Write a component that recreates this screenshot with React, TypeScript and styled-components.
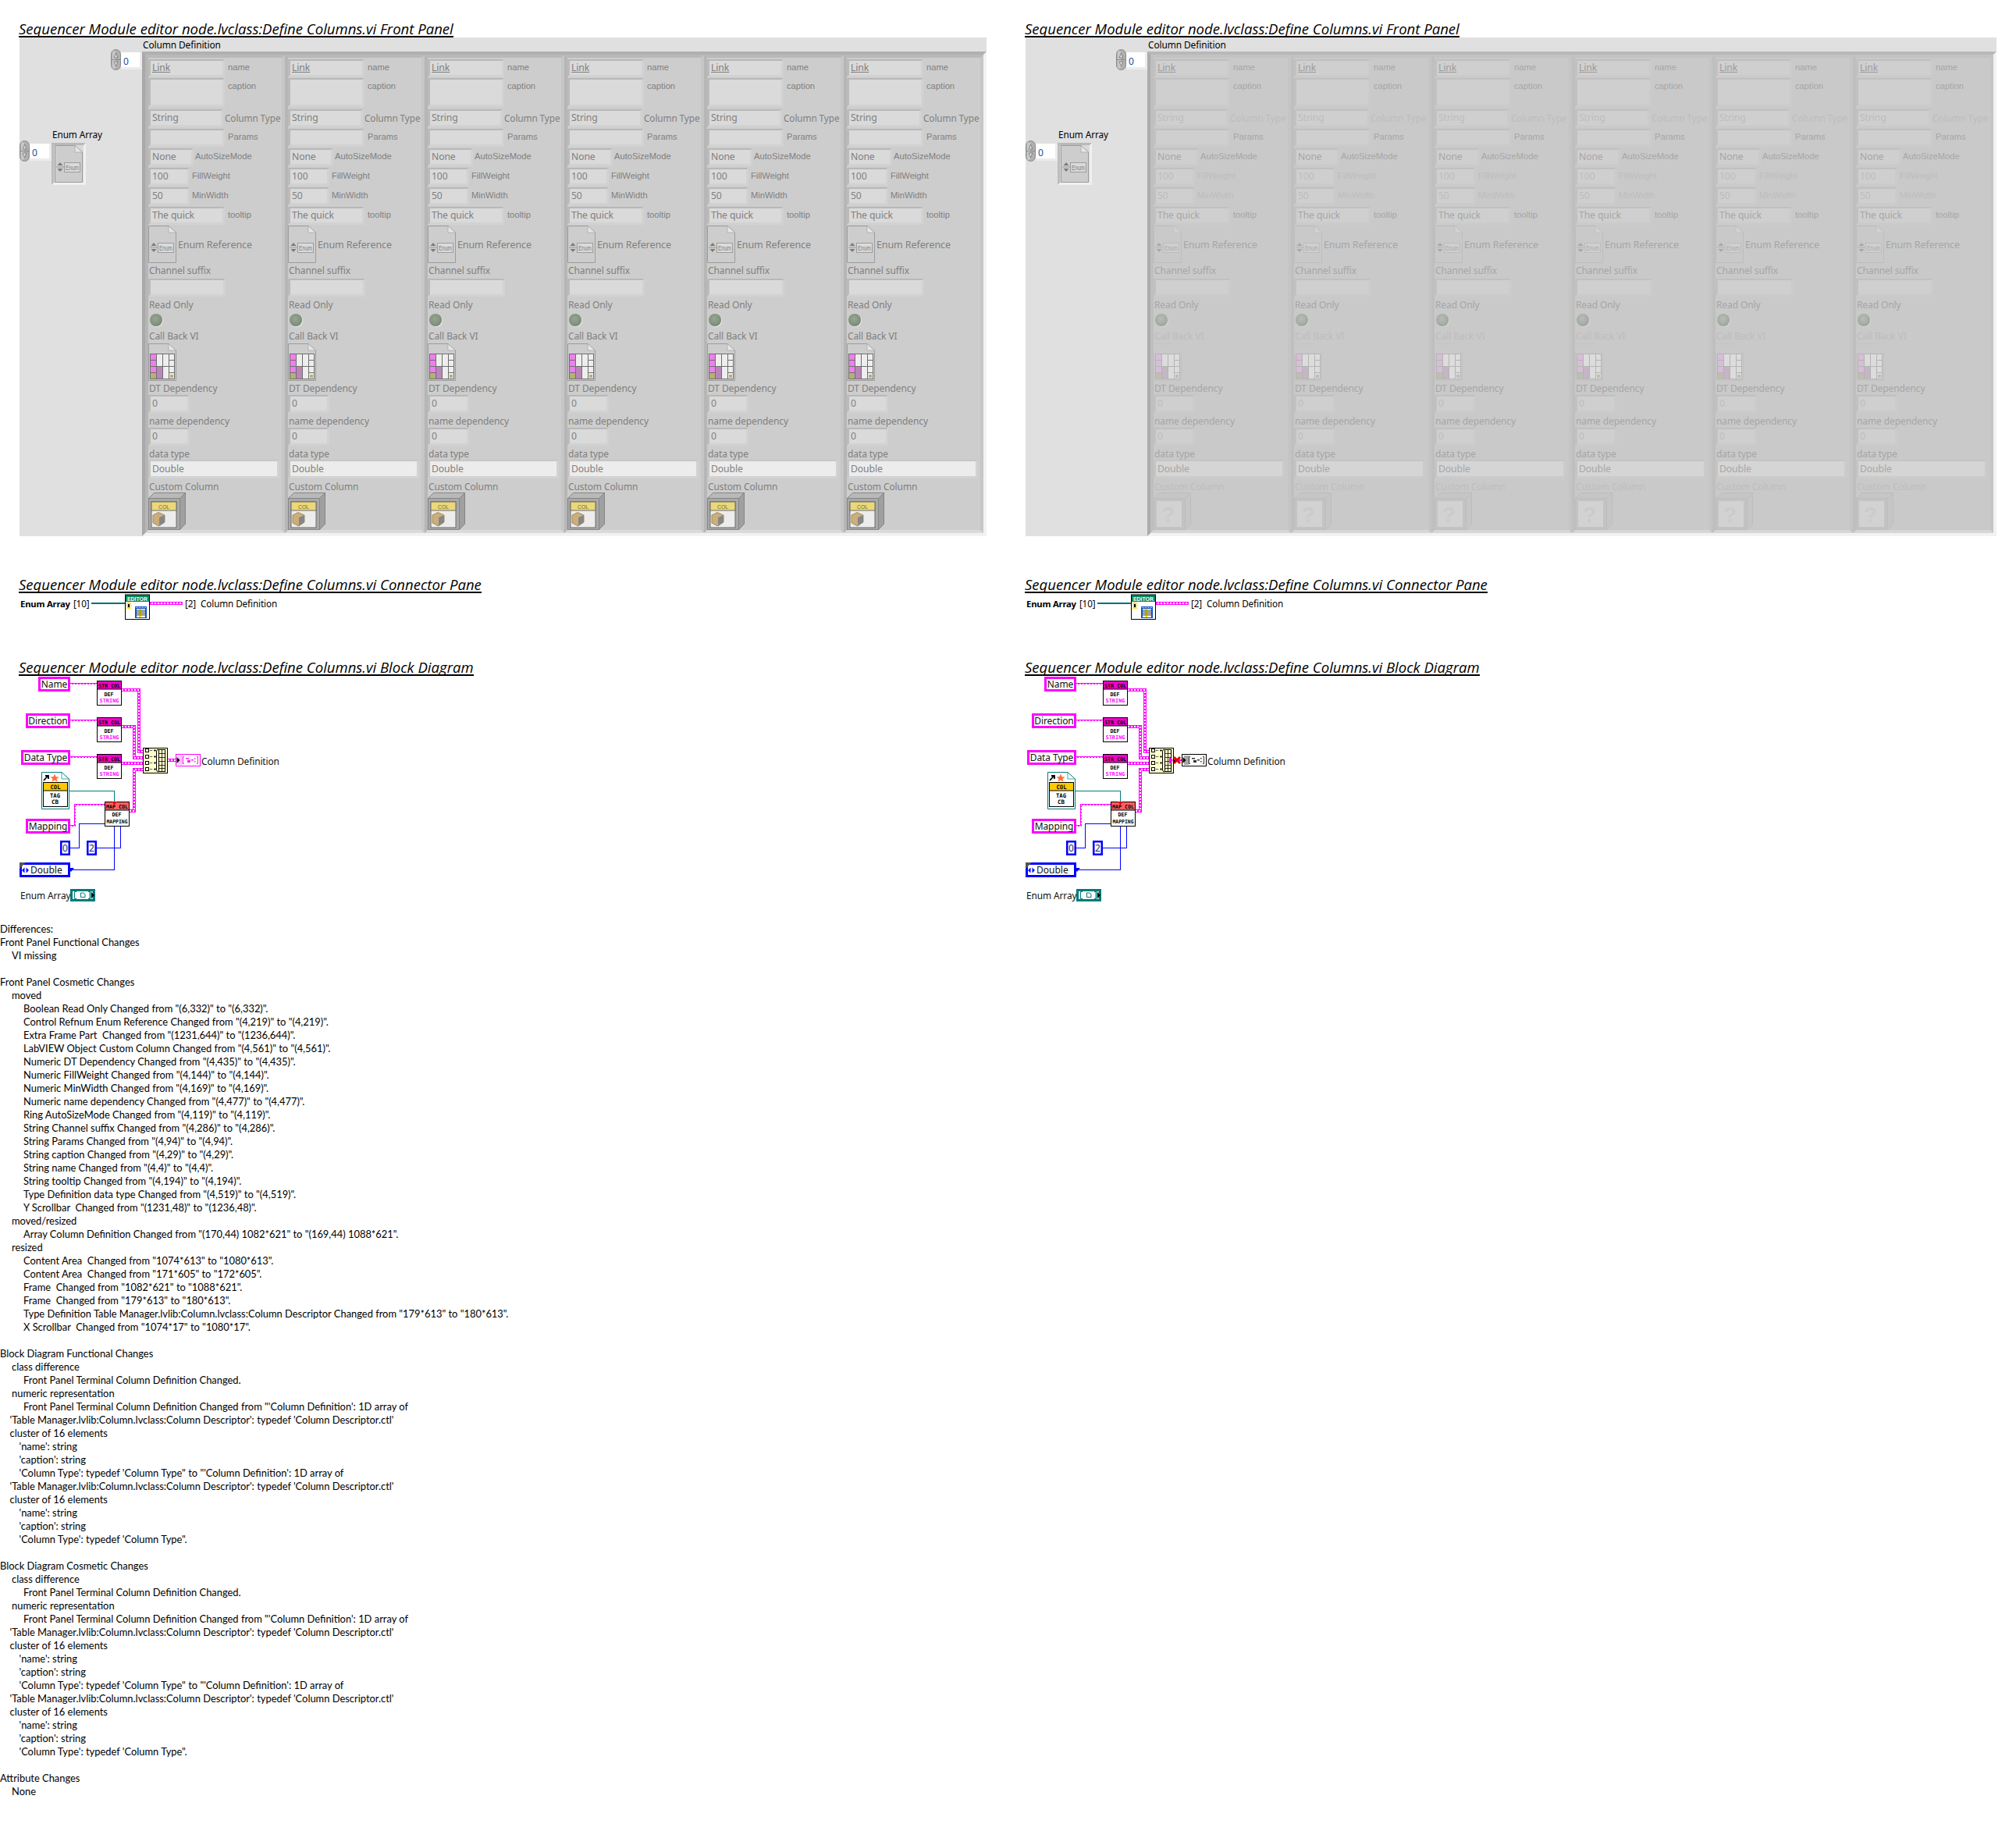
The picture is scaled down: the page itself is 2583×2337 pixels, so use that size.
import React from "react";
import styled, { createGlobalStyle } from "styled-components";

const LV = '"Noto Sans", "Liberation Sans", sans-serif';
const ORIGIN_X = 25;
const ORIGIN_Y = 26;

const Global = createGlobalStyle`
  html, body { margin: 0; padding: 0; background: #fff; }
  #root { width: 2583px; height: 2337px; overflow: hidden; }
`;

const Page = styled.div`
  width: 2583px;
  background: #fff;
  color: #000;
`;
const Versions = styled.div`
  display: grid;
  grid-template-columns: 1289px 1294px;
`;
const VersionColumn = styled.section`
  padding: 26px 0 0 25px;
  display: flex;
  flex-direction: column;
  align-items: flex-start;
`;
const Title = styled.h2<{ $gap?: number }>`
  margin: ${(p) => p.$gap ?? 0}px 0 0 -1px;
  padding: 0;
  height: 20px;
  line-height: 21px;
  font-family: "Open Sans", "Noto Sans", sans-serif;
  font-size: 18.55px;
  font-weight: 400;
  font-style: italic;
  white-space: nowrap;
  border-bottom: 2px solid #000;
`;

/* ---------- Front panel ---------- */
const Panel = styled.div`
  display: flex;
  background: #e0e0e0;
  height: 639px;
`;
const SidePane = styled.div<{ $w: number }>`
  width: ${(p) => p.$w}px;
  display: flex;
  flex-direction: column;
`;
const IndexRow = styled.div`
  display: flex;
  justify-content: flex-end;
  margin-top: 15px;
  height: 27px;
`;
const IndexBox = styled.div<{ $w: number }>`
  box-sizing: border-box;
  width: ${(p) => p.$w}px;
  height: 22px;
  margin-top: 4px;
  padding-left: 3px;
  background: #fff;
  border-right: 3px solid #ececec;
  border-bottom: 3px solid #ececec;
  font: 12px/23px ${LV};
  color: #1b4f9c;
`;
const EnumCaption = styled.div`
  margin: 74px 0 0 42px;
  height: 16px;
  font: 11.8px/16px ${LV};
  letter-spacing: -0.1px;
  color: #000;
`;
const EnumRow = styled.div`
  display: flex;
  align-items: flex-start;
`;
const EnumFrame = styled.div`
  box-sizing: border-box;
  margin-top: 3px;
  width: 44px;
  height: 54px;
  padding: 3px 4px 0 4px;
  background: #d9d9d9;
  border: 3px solid;
  border-color: #b9b9b9 #f0f0f0 #f0f0f0 #bdbdbd;
  & > svg { display: block; margin: -3px 0 0 -3px; }
`;
const ArrayPane = styled.div`
  display: flex;
  flex-direction: column;
`;
const ArrayCaption = styled.div`
  height: 18px;
  padding-left: 1px;
  font: 11.9px/19px ${LV};
  letter-spacing: -0.1px;
  color: #000;
`;
const ArrayFrame = styled.div<{ $cell: number; $faded: boolean }>`
  display: grid;
  grid-template-columns: repeat(6, ${(p) => p.$cell}px);
  border: 4px solid;
  border-color: ${(p) => (p.$faded ? "#b8b8b8 #f2f2f2 #f2f2f2 #acacac" : "#b0b0b0 #f2f2f2 #f2f2f2 #a8a8a8")};
`;
const Cell = styled.div<{ $faded: boolean }>`
  box-sizing: border-box;
  height: 613px;
  padding-top: 2px;
  overflow: hidden;
  background: ${(p) => (p.$faded ? "#c9c9c9" : "#cdcdcd")};
  border: 4px solid;
  border-color: ${(p) =>
    p.$faded ? "#c2c2c2 #c5c5c5 #d6d6d6 #bfbfbf" : "#b9b9b9 #c6c6c6 #dadada #b6b6b6"};
  display: flex;
  flex-direction: column;
`;
const Row = styled.div<{ $h: number }>`
  height: ${(p) => p.$h}px;
  display: flex;
  align-items: flex-start;
  flex: none;
`;
type Tone = "normal" | "pale" | "link";
const toneColor = (faded: boolean, tone: Tone = "normal") =>
  !faded ? "#7f7f7f" : tone === "pale" ? "#bdbdbd" : tone === "link" ? "#9c9c9c" : "#a6a6a6";

const Field = styled.div<{ $w: number; $h: number; $faded: boolean; $tone?: Tone; $under?: boolean }>`
  box-sizing: border-box;
  width: ${(p) => p.$w}px;
  height: ${(p) => p.$h}px;
  flex: none;
  padding-left: 2px;
  background: ${(p) => (p.$faded ? "#cfcfcf" : "#dadada")};
  border: 3px solid;
  border-top-width: 2.5px;
  border-color: ${(p) => (p.$faded ? "#c0c0c0 #cbcbcb #cbcbcb #c1c1c1" : "#b8b8b8 #d2d2d2 #d2d2d2 #bbbbbb")};
  color: ${(p) => toneColor(p.$faded, p.$tone)};
  font: 12.2px/18px ${LV};
  letter-spacing: -0.1px;
  white-space: nowrap;
  text-decoration: ${(p) => (p.$under ? "underline" : "none")};
`;
const TypeField = styled(Field)`
  background: ${(p) => (p.$faded ? "#d5d5d5" : "#ececec")};
  border-color: ${(p) => (p.$faded ? "#c4c4c4 #cbcbcb #cbcbcb #c4c4c4" : "#c6c6c6 #d2d2d2 #d2d2d2 #c6c6c6")};
  line-height: 20px;
`;
const SmallLabel = styled.span<{ $gap: number; $faded: boolean; $tone?: Tone }>`
  margin-left: ${(p) => p.$gap}px;
  font: 11.2px/20px "Liberation Sans", sans-serif;
  color: ${(p) => toneColor(p.$faded, p.$tone)};
  white-space: nowrap;
`;
const WideLabel = styled.span<{ $gap: number; $faded: boolean; $tone?: Tone; $top?: number; $size?: number }>`
  margin: ${(p) => p.$top ?? 1}px 0 0 ${(p) => p.$gap}px;
  font: ${(p) => p.$size ?? 12.5}px/20px ${LV};
  letter-spacing: -0.1px;
  color: ${(p) => toneColor(p.$faded, p.$tone)};
  white-space: nowrap;
`;
const RowLabel = styled.div<{ $faded: boolean; $tone?: Tone }>`
  padding-left: 1px;
  font: 12px/17px ${LV};
  letter-spacing: -0.1px;
  color: ${(p) => toneColor(p.$faded, p.$tone)};
  white-space: nowrap;
`;
const Led = styled.div<{ $faded: boolean }>`
  width: 16px;
  height: 16px;
  margin: 2px 0 0 2px;
  border-radius: 50%;
  background: ${(p) =>
    p.$faded
      ? "radial-gradient(circle at 45% 40%, #b6bdb4 0, #a9b0a8 45%, #9aa19a 80%, #b9bdb9 100%)"
      : "radial-gradient(circle at 45% 40%, #96a595 0, #84957f 50%, #6e7f6e 85%, #7f8a7f 100%)"};
  box-shadow: 1px 1px 1px ${(p) => (p.$faded ? "#d6d6d6" : "#e8e8e8")};
`;
const IconSvg = styled.svg`
  display: block;
  flex: none;
  overflow: visible;
`;

/* ---------- Connector ---------- */
const ConnectorRow = styled.div`
  height: 82px;
  margin-top: 2px;
  display: flex;
  align-items: flex-start;
  font: 11.7px/17px ${LV};
`;
const ConnLead = styled.div`
  width: 92px;
  display: flex;
`;
const ConnBold = styled.span`
  font-weight: 700;
  font-size: 11.3px;
  margin: 3px 4px 0 1px;
  letter-spacing: -0.2px;
  white-space: nowrap;
`;
const ConnText = styled.span<{ $gap: number }>`
  margin: 3px 0 0 ${(p) => p.$gap}px;
  white-space: nowrap;
  letter-spacing: -0.1px;
`;
const TealStub = styled.div`
  width: 43px;
  height: 2px;
  margin: 10px 0 0 0;
  background: #007272;
`;
const PinkStub = styled.div`
  width: 42px;
  height: 4px;
  margin-top: 9px;
  background: repeating-linear-gradient(90deg, #ff33ff 0 2px, #ffffff 2px 4px);
  border-top: 1px solid #ff00ff;
  border-bottom: 1px solid #ff00ff;
  box-sizing: border-box;
`;

/* ---------- Block diagram ---------- */
const Canvas = styled.div`
  position: relative;
  width: 400px;
  height: 316px;
`;
const WireLayer = styled.svg`
  position: absolute;
  left: 0;
  top: 0;
`;
const Slot = styled.div<{ $x: number; $y: number }>`
  position: absolute;
  left: ${(p) => p.$x - ORIGIN_X}px;
  top: ${(p) => p.$y - ORIGIN_Y}px;
  line-height: 0;
`;
const StringConst = styled(Slot)<{ $w: number }>`
  box-sizing: border-box;
  width: ${(p) => p.$w}px;
  height: 19px;
  box-shadow: inset 0 0 0 3px #ff00ff;
  background: #fff;
  font: 12px/19px ${LV};
  letter-spacing: -0.1px;
  color: #111;
  text-align: center;
  white-space: nowrap;
`;
const NumConst = styled(Slot)`
  box-sizing: border-box;
  width: 13px;
  height: 19px;
  box-shadow: inset 0 0 0 2.5px #0000ff;
  background: #fff;
  font: 12px/19px ${LV};
  color: #1c2a5a;
  text-align: center;
`;
const EnumConst = styled(Slot)`
  box-sizing: border-box;
  width: 65px;
  height: 19px;
  padding: 0 3px;
  box-shadow: inset 0 0 0 3px #0000ff;
  background: #fff;
  display: flex;
  align-items: center;
  gap: 2px;
  font: 12px/19px ${LV};
  color: #111;
  & > svg { flex: none; }
`;
const TermLabel = styled(Slot)`
  font: 11.9px/17px ${LV};
  letter-spacing: -0.1px;
  white-space: nowrap;
  color: #111;
`;

/* ---------- Text report ---------- */
const Report = styled.div`
  font-family: Lato, "Noto Sans", sans-serif;
  font-size: 12.9px;
  line-height: 17px;
  color: #000;
`;
const ReportLine = styled.div<{ $indent: number }>`
  height: 17px;
  padding-left: ${(p) => p.$indent}px;
  white-space: pre;
`;

/* ---------- Drawings ---------- */
const Spinner = () => (
  <IconSvg width="13" height="27" viewBox="0 0 13 27">
    <rect x="0.5" y="0.5" width="12" height="26" rx="6" fill="#b0b0b0" stroke="#8a8a8a" />
    <rect x="2" y="2" width="4" height="23" rx="2" fill="#c8c8c8" />
    <line x1="1" y1="13.5" x2="12" y2="13.5" stroke="#8a8a8a" />
    <path d="M6.5 5 L9 11 H4 Z" fill="#d8d8d8" stroke="#6a6a6a" strokeWidth="0.7" />
    <path d="M6.5 22 L9 16 H4 Z" fill="#d8d8d8" stroke="#6a6a6a" strokeWidth="0.7" />
  </IconSvg>
);

const DocEnum = ({ faded, w = 36, h = 48 }: { faded: boolean; w?: number; h?: number }) => {
  const line = faded ? "#bdbdbd" : "#9c9c9c";
  const light = faded ? "#d2d2d2" : "#e6e6e6";
  const txt = faded ? "#a8a8a8" : "#7c7c7c";
  return (
    <IconSvg width={w} height={h} viewBox="0 0 36 48">
      <path d="M0.5 0.5 H26 L35.5 9 V47.5 H0.5 Z" fill={faded ? "#c9c9c9" : "#cdcdcd"} stroke={line} />
      <path d="M26 0.5 V9 H35.5 Z" fill={light} stroke={line} strokeWidth="0.6" />
      <path d="M7 22 L10.5 26 H3.5 Z" fill={txt} />
      <path d="M7 34 L10.5 30 H3.5 Z" fill={txt} />
      <line x1="2" y1="28" x2="12" y2="28" stroke={txt} strokeWidth="0.6" />
      <rect x="12.5" y="22.5" width="20" height="12" fill={faded ? "#cfcfcf" : "#dadada"} stroke={line} />
      <text x="14" y="31.5" fontFamily="Liberation Sans" fontSize="8.5" fill={txt} textLength="17" lengthAdjust="spacingAndGlyphs">Enum</text>
    </IconSvg>
  );
};

const CallbackIcon = ({ faded }: { faded: boolean }) => {
  const pink = faded ? "#d8bdd8" : "#ee7fee";
  const white = faded ? "#dcdcdc" : "#eeeeee";
  const purple = faded ? "#c4b6c4" : "#ba86ba";
  const khaki = faded ? "#bfbfb0" : "#b2b272";
  const edge = faded ? "#b4b4b4" : "#6f6f6f";
  const outline = faded ? "#c2c2c2" : "#9c9c9c";
  return (
    <IconSvg width="36" height="48" viewBox="0 0 36 48">
      {faded ? (
        <path d="M0.5 0.5 H26 M35.5 9.5 V47.5 H0.5 V12" fill="none" stroke={outline} />
      ) : (
        <>
          <path d="M0.5 0.5 H26 L35.5 9 V47.5 H0.5 Z" fill="#cdcdcd" stroke={outline} />
          <path d="M26 0.5 V9 H35.5 Z" fill="#e6e6e6" stroke={outline} strokeWidth="0.6" />
        </>
      )}
      <rect x="2" y="13" width="32" height="33" fill={edge} />
      <rect x="3" y="14" width="7" height="7" fill={pink} />
      <rect x="3" y="22" width="7" height="7" fill={pink} />
      <rect x="3" y="30" width="7" height="7" fill={pink} />
      <rect x="3" y="38" width="7" height="7" fill={khaki} />
      <rect x="11" y="14" width="7" height="15" fill={white} />
      <rect x="11" y="30" width="7" height="15" fill={purple} />
      <rect x="19" y="14" width="7" height="15" fill={white} />
      <rect x="19" y="30" width="7" height="15" fill={white} />
      <rect x="27" y="14" width="6" height="7" fill={white} />
      <rect x="27" y="22" width="6" height="7" fill={white} />
      <rect x="27" y="30" width="6" height="7" fill={white} />
      <rect x="27" y="38" width="6" height="7" fill={white} />
      <rect x="28" y="40" width="4" height="4" fill={khaki} />
    </IconSvg>
  );
};

const ObjectIcon = ({ faded }: { faded: boolean }) => {
  const line = faded ? "#bdbdbd" : "#858585";
  return (
    <IconSvg width="48" height="48" viewBox="0 0 48 48">
      <path d="M7.5 0.5 H47.5 L40.5 7.5 H0.5 Z" fill={faded ? "#c6c6c6" : "#b9b9b9"} stroke={line} />
      <rect x="0.5" y="7.5" width="40" height="40" fill={faded ? "#c3c3c3" : "#a9a9a9"} stroke={line} />
      <path d="M40.5 7.5 L47.5 0.5 V40.5 L40.5 47.5 Z" fill={faded ? "#c6c6c6" : "#a0a0a0"} stroke={line} />
      {faded ? (
        <>
          <rect x="4" y="11" width="32" height="33" fill="#d2d2d2" />
          <text x="10" y="38" fontFamily="Liberation Sans" fontWeight="700" fontSize="28" fill="#cbcbcb">?</text>
        </>
      ) : (
        <>
          <rect x="4" y="12" width="32" height="33" fill="#ececec" stroke="#6d6d6d" />
          <rect x="4" y="12" width="32" height="11" fill="#ecd878" stroke="#6d6d6d" />
          <text x="20" y="21" textAnchor="middle" fontFamily="Liberation Sans" fontSize="7.5" fill="#6b6b3a" textLength="14" lengthAdjust="spacingAndGlyphs">COL</text>
          <path d="M6 29 L13 25.5 L21 29 V38 L13.5 43 L6 39 Z" fill="#cbae7a" stroke="#a68d5c" />
          <path d="M14 32 L21 29 V38 L14 43 Z" fill="#868686" />
        </>
      )}
    </IconSvg>
  );
};

const Column = ({ faded }: { faded: boolean }) => (
  <Cell $faded={faded}>
    <Row $h={24}>
      <Field $w={98} $h={23} $faded={faded} $tone="link" $under>Link</Field>
      <SmallLabel $gap={4} $faded={faded}>name</SmallLabel>
    </Row>
    <Row $h={40}>
      <Field $w={98} $h={37} $faded={faded} />
      <SmallLabel $gap={4} $faded={faded}>caption</SmallLabel>
    </Row>
    <Row $h={25}>
      <Field $w={96} $h={23} $faded={faded} $tone="pale">String</Field>
      <WideLabel $gap={2} $faded={faded} $tone="pale" $size={11.8}>Column Type</WideLabel>
    </Row>
    <Row $h={25}>
      <Field $w={98} $h={23} $faded={faded} />
      <SmallLabel $gap={4} $faded={faded}>Params</SmallLabel>
    </Row>
    <Row $h={25}>
      <Field $w={58} $h={23} $faded={faded}>None</Field>
      <SmallLabel $gap={2} $faded={faded}>AutoSizeMode</SmallLabel>
    </Row>
    <Row $h={25}>
      <Field $w={53} $h={23} $faded={faded} $tone="pale">100</Field>
      <SmallLabel $gap={3} $faded={faded} $tone="pale">FillWeight</SmallLabel>
    </Row>
    <Row $h={25}>
      <Field $w={53} $h={23} $faded={faded} $tone="pale">50</Field>
      <SmallLabel $gap={3} $faded={faded} $tone="pale">MinWidth</SmallLabel>
    </Row>
    <Row $h={24}>
      <Field $w={98} $h={23} $faded={faded}>The quick</Field>
      <SmallLabel $gap={4} $faded={faded}>tooltip</SmallLabel>
    </Row>
    <Row $h={49}>
      <DocEnum faded={faded} />
      <WideLabel $gap={2} $faded={faded} $top={15}>Enum Reference</WideLabel>
    </Row>
    <Row $h={19}><RowLabel $faded={faded}>Channel suffix</RowLabel></Row>
    <Row $h={25}><Field $w={99} $h={23} $faded={faded} /></Row>
    <Row $h={18}><RowLabel $faded={faded}>Read Only</RowLabel></Row>
    <Row $h={22}><Led $faded={faded} /></Row>
    <Row $h={18}><RowLabel $faded={faded} $tone="pale">Call Back VI</RowLabel></Row>
    <Row $h={49}><CallbackIcon faded={faded} /></Row>
    <Row $h={17}><RowLabel $faded={faded}>DT Dependency</RowLabel></Row>
    <Row $h={25}><Field $w={53} $h={23} $faded={faded} $tone="pale">0</Field></Row>
    <Row $h={17}><RowLabel $faded={faded}>name dependency</RowLabel></Row>
    <Row $h={25}><Field $w={53} $h={23} $faded={faded} $tone="pale">0</Field></Row>
    <Row $h={16}><RowLabel $faded={faded}>data type</RowLabel></Row>
    <Row $h={26}><TypeField $w={168} $h={24} $faded={faded}>Double</TypeField></Row>
    <Row $h={16}><RowLabel $faded={faded} $tone="pale">Custom Column</RowLabel></Row>
    <Row $h={48}><ObjectIcon faded={faded} /></Row>
  </Cell>
);

const FrontPanel = ({ faded }: { faded: boolean }) => (
  <Panel>
    <SidePane $w={faded ? 156 : 157}>
      <IndexRow>
        <Spinner />
        <IndexBox $w={27}>0</IndexBox>
      </IndexRow>
      <EnumCaption>Enum Array</EnumCaption>
      <EnumRow>
        <Spinner />
        <IndexBox $w={28}>0</IndexBox>
        <EnumFrame>
          <DocEnum faded={false} />
        </EnumFrame>
      </EnumRow>
    </SidePane>
    <ArrayPane>
      <ArrayCaption>Column Definition</ArrayCaption>
      <ArrayFrame $cell={faded ? 180 : 179} $faded={faded}>
        {[0, 1, 2, 3, 4, 5].map((i) => (
          <Column key={i} faded={faded} />
        ))}
      </ArrayFrame>
    </ArrayPane>
  </Panel>
);

const ConnectorIcon = () => (
  <IconSvg width="32" height="32" viewBox="0 0 32 32">
    <rect x="0.5" y="0.5" width="31" height="31" fill="#fff" stroke="#000" />
    <rect x="0" y="0" width="32" height="9" fill="#008a62" />
    <text x="16" y="7.5" textAnchor="middle" fontFamily="Liberation Sans" fontWeight="700" fontSize="7.5" fill="#fff" textLength="26" lengthAdjust="spacingAndGlyphs">EDITOR</text>
    <rect x="0.5" y="0" width="31" height="31.5" fill="none" stroke="#000" />
    <path d="M5 9 V19 M1 14 H9 M2 10 L8 18 M8 10 L2 18" stroke="#e8d000" strokeWidth="1.2" />
    <rect x="4" y="12" width="2" height="4" fill="#000" />
    <rect x="13" y="15" width="15" height="15" fill="#0a55c8" />
    <rect x="15" y="18" width="11" height="11" fill="#ffffff" />
    <path d="M15 20 H26 M15 22 H26 M15 24 H26 M15 26 H26" stroke="#111" strokeWidth="0.8" />
    <rect x="18" y="18" width="3" height="11" fill="#f6e800" opacity="0.95" />
    <path d="M18 20 H21 M18 22 H21 M18 24 H21 M18 26 H21" stroke="#111" strokeWidth="0.6" />
    <path d="M14 16.5 H27" stroke="#ffffff" strokeWidth="1" strokeDasharray="1 1" />
  </IconSvg>
);

const StrWire = ({ d }: { d: string }) => (
  <>
    <path d={d} fill="none" stroke="#ff00ff" strokeWidth="2" />
    <path d={d} fill="none" stroke="#ffffff" strokeWidth="0.9" strokeDasharray="2 2" />
  </>
);
const ArrWire = ({ d }: { d: string }) => (
  <>
    <path d={d} fill="none" stroke="#ff00ff" strokeWidth="4" />
    <path d={d} fill="none" stroke="#ffffff" strokeWidth="1.2" strokeDasharray="2 2" />
  </>
);
const PlainWire = ({ d, color }: { d: string; color: string }) => (
  <path d={d} fill="none" stroke={color} strokeWidth="1" />
);

const SubVI = ({ x, y, head, color, line1, line2, line2Color, small }: {
  x: number; y: number; head: string; color: string; line1: string; line2: string; line2Color: string; small?: boolean;
}) => (
  <Slot $x={x} $y={y}>
    <IconSvg width="32" height="32" viewBox="0 0 32 32">
      <rect x="0.5" y="0.5" width="31" height="31" fill="#fff" stroke="#000" />
      <rect x="0.5" y="0.5" width="31" height="10.5" fill={color} stroke="#000" />
      <text x="16" y="8.5" textAnchor="middle" fontFamily="DejaVu Sans Mono" fontWeight="700" fontSize="6.6" fill="#000" textLength="28" lengthAdjust="spacingAndGlyphs">{head}</text>
      <text x="15.5" y={small ? 19 : 20} textAnchor="middle" fontFamily="DejaVu Sans Mono" fontWeight="700" fontSize="7" fill="#000" textLength="12" lengthAdjust="spacingAndGlyphs">{line1}</text>
      <text x="16" y="28" textAnchor="middle" fontFamily="DejaVu Sans Mono" fontWeight="700" fontSize="6.6" fill={line2Color} textLength={small ? 27 : 25} lengthAdjust="spacingAndGlyphs">{line2}</text>
    </IconSvg>
  </Slot>
);

const ColumnConstant = () => (
  <Slot $x={53} $y={149}>
    <IconSvg width="36" height="48" viewBox="0 0 36 48">
      <path d="M0.5 0.5 H26 L35.5 9 V47.5 H0.5 Z" fill="#fff" stroke="#007b7b" />
      <path d="M26 0.5 V9 H35.5" fill="none" stroke="#007b7b" strokeWidth="0.7" />
      <path d="M3 11 L8 5.5 M5 5 H9 V9" fill="none" stroke="#000" strokeWidth="1.8" />
      <path d="M17 2.5 L18.6 6.2 L22.6 6.4 L19.4 9 L20.6 12.6 L17 10.6 L13.4 12.6 L14.6 9 L11.4 6.4 L15.4 6.2 Z" fill="#ff6b3a" />
      <rect x="2.5" y="13.5" width="31" height="31" fill="#fff" stroke="#000" />
      <rect x="2.5" y="13.5" width="31" height="10.5" fill="#ffc800" stroke="#000" />
      <text x="18" y="22" textAnchor="middle" fontFamily="DejaVu Sans Mono" fontWeight="700" fontSize="7.5" fill="#000" textLength="13" lengthAdjust="spacingAndGlyphs">COL</text>
      <text x="17.5" y="33" textAnchor="middle" fontFamily="DejaVu Sans Mono" fontWeight="700" fontSize="7.5" fill="#000" textLength="13" lengthAdjust="spacingAndGlyphs">TAG</text>
      <text x="17.5" y="41" textAnchor="middle" fontFamily="DejaVu Sans Mono" fontWeight="700" fontSize="7.5" fill="#000" textLength="9" lengthAdjust="spacingAndGlyphs">CB</text>
    </IconSvg>
  </Slot>
);

const BuildArray = () => (
  <Slot $x={183} $y={118}>
    <IconSvg width="32" height="33" viewBox="0 0 32 33">
      <rect x="0.5" y="0.5" width="31" height="32" fill="#ffffcc" stroke="#000" />
      {[4, 12, 20, 28].map((y) => (
        <g key={y}>
          <rect x="3.5" y={y - 2.5} width="4" height="4" fill="#fff" stroke="#000" />
          <path d={`M9 ${y - 0.5} H13`} stroke="#000" strokeWidth="1" strokeDasharray="1 1" />
          <path d={`M14 ${y - 0.5} H17 M15.5 ${y - 2} V${y + 1}`} stroke="#000" strokeWidth="0.8" />
        </g>
      ))}
      <path d="M20 2 Q17.5 2 17.5 5 V28 Q17.5 31 20 31" fill="none" stroke="#000" />
      <rect x="20.5" y="2.5" width="8" height="28" fill="#ffffcc" stroke="#000" />
      <path d="M24.5 2.5 V30.5 M20.5 7.5 H28.5 M20.5 12.5 H28.5 M20.5 17.5 H28.5 M20.5 22.5 H28.5 M20.5 26.5 H28.5" stroke="#000" strokeWidth="0.8" />
    </IconSvg>
  </Slot>
);

const OutputTerminal = ({ broken }: { broken: boolean }) => {
  const ink = broken ? "#333" : "#ff20ff";
  return (
    <Slot $x={225} $y={126}>
      <IconSvg width="32" height="16" viewBox="0 0 32 16">
        <rect x="0.5" y="0.5" width="31" height="15" fill="#fff" stroke={broken ? "#000" : "#ff00ff"} />
        <rect x="3" y="2" width="6" height="12" fill={broken ? "#a8a8a8" : "#ffc0ff"} />
        <path d="M1.5 4 L5.5 8 L1.5 12 Z" fill="#000" />
        <path d="M11 3.5 H9.5 V12.5 H11 M27 3.5 H28.5 V12.5 H27" fill="none" stroke={ink} />
        <rect x="13" y="5" width="4" height="1.5" fill={ink} />
        <rect x="15" y="8" width="4" height="3" fill={ink} />
        <rect x="20" y="7" width="3" height="1.5" fill={ink} />
        <rect x="24" y="5" width="1.5" height="1.5" fill={ink} />
        <rect x="24" y="9" width="1.5" height="1.5" fill={ink} />
      </IconSvg>
    </Slot>
  );
};

const EnumTerminal = () => (
  <Slot $x={90} $y={299}>
    <IconSvg width="32" height="16" viewBox="0 0 32 16">
      <rect x="1.5" y="1.5" width="29" height="13" fill="#fff" stroke="#007b7b" strokeWidth="3" />
      <rect x="24" y="3" width="5" height="10" fill="#a8d4d4" />
      <path d="M8 3.5 H5.5 V12.5 H8 M23 3.5 H25.5 V12.5 H23" fill="none" stroke="#007b7b" />
      <path d="M13.5 5 H17 L19 7 V10.5 H13.5 Z" fill="#fff" stroke="#007b7b" />
      <path d="M27 4 L31 8 L27 12 Z" fill="#000" />
    </IconSvg>
  </Slot>
);

const Diagram = ({ broken }: { broken: boolean }) => (
  <Canvas>
    <WireLayer width="400" height="316" viewBox={`${ORIGIN_X} ${ORIGIN_Y} 400 316`} shapeRendering="crispEdges">
      <StrWire d="M90 36 H124" />
      <StrWire d="M90 83 H124" />
      <StrWire d="M89 130 H124" />
      <StrWire d="M90 218 H96 V191 H134" />
      <ArrWire d="M156 44 H178 V123 H183" />
      <ArrWire d="M156 91 H172 V131 H183" />
      <ArrWire d="M156 138 H183" />
      <ArrWire d="M166 199 H172 V146 H183" />
      {!broken && <ArrWire d="M215 134 H225" />}
      <PlainWire d="M89 173.5 H146.5 V187" color="#007b7b" />
      <PlainWire d="M134 215.5 H101.5 V246.5 H90" color="#0000ff" />
      <PlainWire d="M124 246.5 H154.5 V219" color="#0000ff" />
      <PlainWire d="M90 274.5 H146.5 V219" color="#0000ff" />
    </WireLayer>
    <StringConst $x={49} $y={27} $w={41}>Name</StringConst>
    <StringConst $x={33} $y={74} $w={57}>Direction</StringConst>
    <StringConst $x={27} $y={121} $w={63}>Data Type</StringConst>
    <StringConst $x={33} $y={209} $w={57}>Mapping</StringConst>
    <SubVI x={124} y={32} head="STR COL" color="#f000c8" line1="DEF" line2="STRING" line2Color="#ff00ff" />
    <SubVI x={124} y={79} head="STR COL" color="#f000c8" line1="DEF" line2="STRING" line2Color="#ff00ff" />
    <SubVI x={124} y={126} head="STR COL" color="#f000c8" line1="DEF" line2="STRING" line2Color="#ff00ff" />
    <ColumnConstant />
    <SubVI x={134} y={187} head="MAP COL" color="#ff6060" line1="DEF" line2="MAPPING" line2Color="#000" small />
    <Slot $x={143} $y={187}>
      <IconSvg width="7" height="4" viewBox="0 0 7 4">
        <path d="M0 0 H7 L3.5 4 Z" fill="#e00000" />
      </IconSvg>
    </Slot>
    <BuildArray />
    {broken && (
      <Slot $x={209} $y={127}>
        <IconSvg width="16" height="14" viewBox="0 0 16 14">
          <path d="M0 2 L5 7 L0 12 Z" fill="#ff00ff" />
          <path d="M5 7 H16" stroke="#ff00ff" strokeWidth="2" />
          <path d="M6 3 L14 11 M14 3 L6 11" stroke="#e00000" strokeWidth="3" />
          <path d="M5 5 L8 8 L5 11 Z" fill="#000" />
        </IconSvg>
      </Slot>
    )}
    <OutputTerminal broken={broken} />
    <TermLabel $x={258} $y={127}>Column Definition</TermLabel>
    <NumConst $x={77} $y={237}>0</NumConst>
    <NumConst $x={111} $y={237}>2</NumConst>
    <EnumConst $x={25} $y={265}>
      <svg width="9" height="8" viewBox="0 0 9 8">
        <path d="M3.5 0.5 L0 4 L3.5 7.5 Z M5.5 0.5 L9 4 L5.5 7.5 Z" fill="#0000ff" />
      </svg>
      <span>Double</span>
      <svg width="8" height="6" viewBox="0 0 8 6" style={{ marginLeft: 5 }}>
        <path d="M0 0 H8 L4 5 Z" fill="#0000ff" />
      </svg>
    </EnumConst>
    <Slot $x={25} $y={265}>
      <IconSvg width="8" height="8" viewBox="0 0 8 8">
        <path d="M0 0 H8 L0 8 Z" fill="#555" />
      </IconSvg>
    </Slot>
    <TermLabel $x={26} $y={299}>Enum Array</TermLabel>
    <EnumTerminal />
  </Canvas>
);

const Version = ({ broken }: { broken: boolean }) => (
  <VersionColumn>
    <Title>Sequencer Module editor node.lvclass:Define Columns.vi Front Panel</Title>
    <FrontPanel faded={broken} />
    <Title $gap={51}>Sequencer Module editor node.lvclass:Define Columns.vi Connector Pane</Title>
    <ConnectorRow>
      <ConnLead>
        <ConnBold>Enum Array</ConnBold>
        <ConnText $gap={0}>[10]</ConnText>
      </ConnLead>
      <TealStub />
      <ConnectorIcon />
      <PinkStub />
      <ConnText $gap={3}>[2]&nbsp; Column Definition</ConnText>
    </ConnectorRow>
    <Title>Sequencer Module editor node.lvclass:Define Columns.vi Block Diagram</Title>
    <Diagram broken={broken} />
  </VersionColumn>
);

const TABLE_1 = `'Table Manager.lvlib:Column.lvclass:Column Descriptor': typedef 'Column Descriptor.ctl'`;
const clusterBlock: [number, string][] = [
  [15, "class difference"],
  [30, "Front Panel Terminal Column Definition Changed."],
  [15, "numeric representation"],
  [30, `Front Panel Terminal Column Definition Changed from "'Column Definition': 1D array of`],
  [12.5, TABLE_1],
  [12.5, "cluster of 16 elements"],
  [24.5, "'name': string"],
  [24.5, "'caption': string"],
  [24.5, `'Column Type': typedef 'Column Type" to "'Column Definition': 1D array of`],
  [12.5, TABLE_1],
  [12.5, "cluster of 16 elements"],
  [24.5, "'name': string"],
  [24.5, "'caption': string"],
  [24.5, `'Column Type': typedef 'Column Type".`],
];

const REPORT: [number, string][] = [
  [0, "Differences:"],
  [0, "Front Panel Functional Changes"],
  [15, "VI missing"],
  [0, ""],
  [0, "Front Panel Cosmetic Changes"],
  [15, "moved"],
  [30, `Boolean Read Only Changed from "(6,332)" to "(6,332)".`],
  [30, `Control Refnum Enum Reference Changed from "(4,219)" to "(4,219)".`],
  [30, `Extra Frame Part  Changed from "(1231,644)" to "(1236,644)".`],
  [30, `LabVIEW Object Custom Column Changed from "(4,561)" to "(4,561)".`],
  [30, `Numeric DT Dependency Changed from "(4,435)" to "(4,435)".`],
  [30, `Numeric FillWeight Changed from "(4,144)" to "(4,144)".`],
  [30, `Numeric MinWidth Changed from "(4,169)" to "(4,169)".`],
  [30, `Numeric name dependency Changed from "(4,477)" to "(4,477)".`],
  [30, `Ring AutoSizeMode Changed from "(4,119)" to "(4,119)".`],
  [30, `String Channel suffix Changed from "(4,286)" to "(4,286)".`],
  [30, `String Params Changed from "(4,94)" to "(4,94)".`],
  [30, `String caption Changed from "(4,29)" to "(4,29)".`],
  [30, `String name Changed from "(4,4)" to "(4,4)".`],
  [30, `String tooltip Changed from "(4,194)" to "(4,194)".`],
  [30, `Type Definition data type Changed from "(4,519)" to "(4,519)".`],
  [30, `Y Scrollbar  Changed from "(1231,48)" to "(1236,48)".`],
  [15, "moved/resized"],
  [30, `Array Column Definition Changed from "(170,44) 1082*621" to "(169,44) 1088*621".`],
  [15, "resized"],
  [30, `Content Area  Changed from "1074*613" to "1080*613".`],
  [30, `Content Area  Changed from "171*605" to "172*605".`],
  [30, `Frame  Changed from "1082*621" to "1088*621".`],
  [30, `Frame  Changed from "179*613" to "180*613".`],
  [30, `Type Definition Table Manager.lvlib:Column.lvclass:Column Descriptor Changed from "179*613" to "180*613".`],
  [30, `X Scrollbar  Changed from "1074*17" to "1080*17".`],
  [0, ""],
  [0, "Block Diagram Functional Changes"],
  ...clusterBlock,
  [0, ""],
  [0, "Block Diagram Cosmetic Changes"],
  ...clusterBlock,
  [0, ""],
  [0, "Attribute Changes"],
  [15, "None"],
];

export default function App() {
  return (
    <Page>
      <Global />
      <Versions>
        <Version broken={false} />
        <Version broken />
      </Versions>
      <Report>
        {REPORT.map(([indent, text], i) => (
          <ReportLine key={i} $indent={indent}>{text}</ReportLine>
        ))}
      </Report>
    </Page>
  );
}
